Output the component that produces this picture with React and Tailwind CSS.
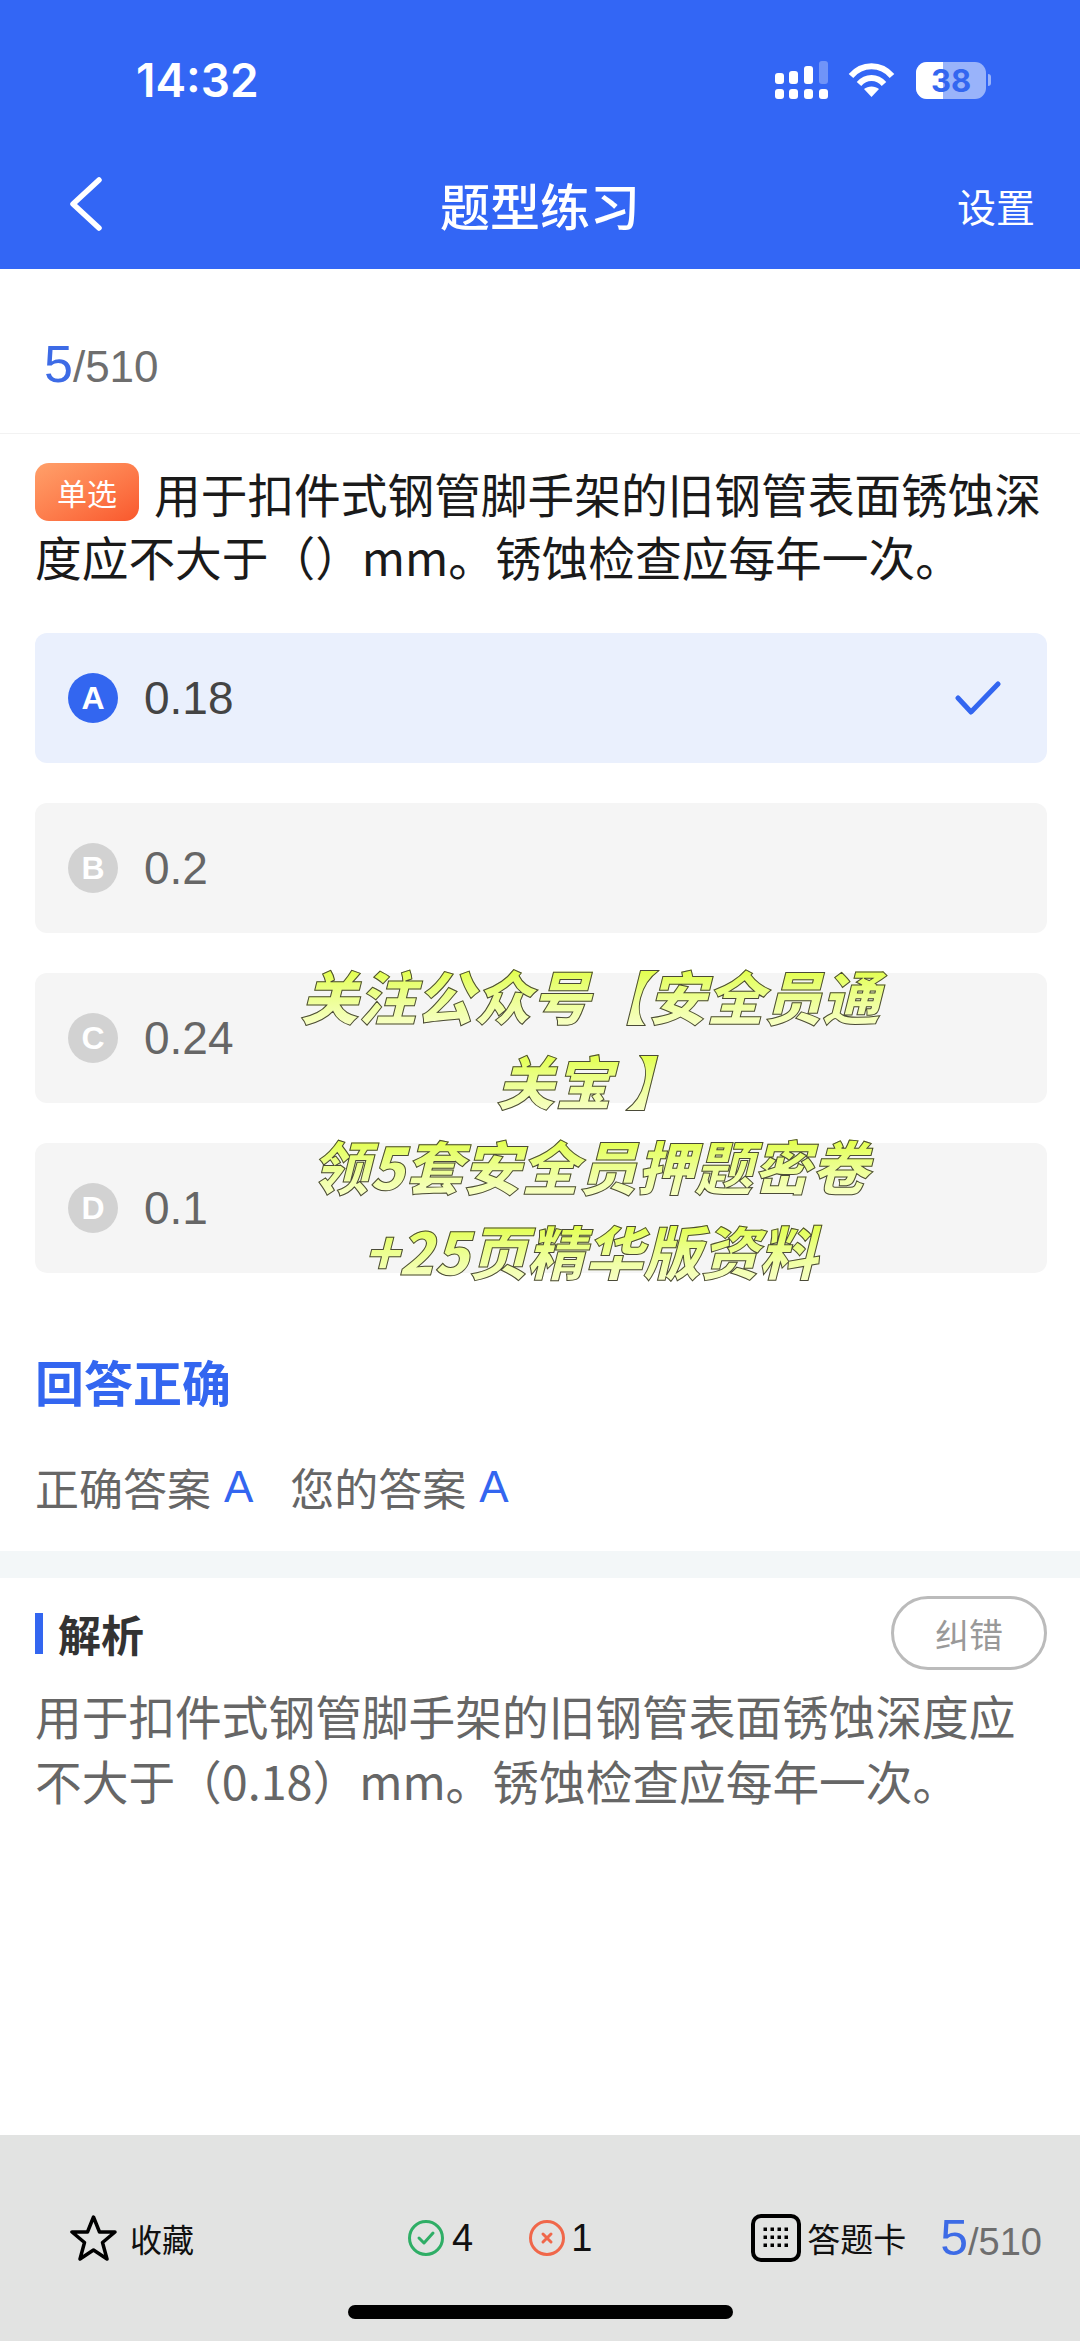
const options = [
  { letter: "B", value: "0.2" },
  { letter: "C", value: "0.24" },
  { letter: "D", value: "0.1" },
]

const promoLines = ["关注公众号【安全员通", "关宝 】", "领5套安全员押题密卷", "+25页精华版资料"]

function StatusIcons() {
  return (
    <div className="flex items-center">
      <svg width="55" height="40" viewBox="0 0 55 40" fill="white">
        <rect x="1" y="13" width="9" height="11" rx="3" />
        <rect x="15" y="11" width="9" height="13" rx="3" />
        <rect x="30" y="6" width="9" height="18" rx="3" />
        <rect x="45" y="1" width="9" height="23" rx="3" opacity="0.3" />
        <rect x="1" y="29" width="9" height="10" rx="3" />
        <rect x="15" y="29" width="9" height="10" rx="3" />
        <rect x="30" y="29" width="9" height="10" rx="3" />
        <rect x="45" y="29" width="9" height="10" rx="3" />
      </svg>
      <svg className="ml-[19px]" width="47" height="36" viewBox="0 0 47 36" fill="none" stroke="white" strokeWidth="6">
        <path d="M3 14C14 1 33 1 44 14" />
        <path d="M11 22C18 14 29 14 36 22" />
        <path d="M23.5 35L16 27C20 23.500 27 23.500 31 27Z" fill="white" stroke="none" />
      </svg>
      <div className="ml-[21px] relative w-[70px] h-[37px] rounded-[11px] bg-white/50 overflow-hidden flex items-center justify-center">
        <div className="absolute left-0 top-0 h-full w-[27px] bg-white" />
        <span className="relative text-[31px] font-bold text-[#3366f0] font-['Inter',sans-serif] leading-none">38</span>
      </div>
      <div className="ml-[2px] w-[3px] h-[12px] rounded-r bg-white/50" />
    </div>
  )
}

function OptionCircle({ letter, active }) {
  return (
    <span className={`w-[50px] h-[50px] rounded-full flex items-center justify-center text-white text-[32px] font-semibold font-['Liberation_Sans',sans-serif] ${active ? "bg-[#3366f0]" : "bg-[#d2d2d2]"}`}>
      {letter}
    </span>
  )
}

function Counter({ big, small }) {
  return (
    <span className="inline-flex items-baseline font-['Liberation_Sans',sans-serif]">
      <span className={`${big} leading-none text-[#3d6be6]`}>5</span>
      <span className={`${small} leading-none text-[#6e6e6e]`}>/510</span>
    </span>
  )
}

export default function App() {
  return (
    <div className="relative w-[1080px] h-[2341px] overflow-hidden bg-white flex flex-col font-['Noto_Sans_CJK_SC',sans-serif]">
      <header className="h-[269px] shrink-0 bg-[#3366f5] text-white">
        <div className="h-[48px] mt-[56px] pl-[136px] pr-[89px] flex items-center justify-between">
          <span className="text-[46px] font-semibold font-['Inter',sans-serif] leading-none">14:32</span>
          <StatusIcons />
        </div>
        <div className="mt-[60px] h-[80px] pl-[45px] pr-[45px] grid grid-cols-[1fr_auto_1fr] items-center">
          <svg className="ml-[22px]" width="36" height="54" viewBox="0 0 36 54" fill="none" stroke="white" strokeWidth="5.500" strokeLinecap="round" strokeLinejoin="round">
            <path d="M32 3L6 27L32 51" />
          </svg>
          <h1 className="text-[50px] font-medium leading-none">题型练习</h1>
          <span className="justify-self-end mt-[3px] text-[39px] leading-none">设置</span>
        </div>
      </header>

      <div className="h-[165px] shrink-0 pt-[25px] pl-[44px] flex items-center border-b border-[#f2f2f2]">
        <Counter big="text-[52px]" small="text-[44px]" />
      </div>

      <div className="pl-[35px] pr-[33px] pt-[27px]">
        <p className="text-[46.700px] leading-[63px] text-[#1a1a1a]">
          <span className="inline-flex align-top mt-[2px] mr-[15px] w-[104px] h-[58px] rounded-[14px] bg-gradient-to-br from-[#ffa06a] to-[#f9572c] text-white text-[30px] items-center justify-center">
            单选
          </span>
          用于扣件式钢管脚手架的旧钢管表面锈蚀深度应不大于（）mm。锈蚀检查应每年一次。
        </p>

        <div className="mt-[46px] flex flex-col gap-[40px]">
          <div className="h-[130px] rounded-[12px] bg-[#eaf0fd] pl-[33px] pr-[46px] flex items-center">
            <OptionCircle letter="A" active />
            <span className="ml-[26px] text-[46px] text-[#444] font-['Liberation_Sans',sans-serif]">0.18</span>
            <svg className="ml-auto" width="46" height="36" viewBox="0 0 46 36" fill="none" stroke="#3366f0" strokeWidth="5" strokeLinecap="round" strokeLinejoin="round">
              <path d="M3 18L16 32L43 4" />
            </svg>
          </div>
          {options.map((o) => (
            <div key={o.letter} className="h-[130px] rounded-[12px] bg-[#f5f5f5] pl-[33px] flex items-center">
              <OptionCircle letter={o.letter} />
              <span className="ml-[26px] text-[46px] text-[#666] font-['Liberation_Sans',sans-serif]">{o.value}</span>
            </div>
          ))}
        </div>

        <h2 className="mt-[78px] text-[49px] leading-[60px] font-bold text-[#3366f0]">回答正确</h2>
        <div className="mt-[46px] text-[44px] leading-[60px] text-[#666] flex">
          <span>正确答案</span>
          <span className="ml-[13px] text-[#3366f0] font-['Liberation_Sans',sans-serif]">A</span>
          <span className="ml-[37px]">您的答案</span>
          <span className="ml-[13px] text-[#3366f0] font-['Liberation_Sans',sans-serif]">A</span>
        </div>
      </div>

      <div className="mt-[34px] h-[27px] shrink-0 bg-[#f3f7f8]" />

      <div className="pl-[35px] pr-[33px] pt-[18px]">
        <div className="h-[74px] flex items-center justify-between">
          <div className="flex items-center">
            <span className="w-[8px] h-[41px] bg-[#3366f0]" />
            <span className="ml-[15px] text-[43px] font-bold text-[#333] leading-none">解析</span>
          </div>
          <span className="w-[156px] h-[74px] rounded-[37px] border-[3px] border-[#bbb] flex items-center justify-center text-[34px] text-[#999]">
            纠错
          </span>
        </div>
        <p className="mt-[12px] text-[46.700px] leading-[65px] text-[#666]">
          用于扣件式钢管脚手架的旧钢管表面锈蚀深度应不大于（0.18）mm。锈蚀检查应每年一次。
        </p>
      </div>

      <footer className="mt-auto h-[206px] shrink-0 bg-[#e2e3e2] pt-[73px]">
        <div className="h-[60px] pl-[70px] pr-[38px] flex items-center text-[#111]">
          <div className="flex items-center">
            <svg width="47" height="48" viewBox="0 0 47 48" fill="none" stroke="black" strokeWidth="3.500" strokeLinejoin="round">
              <path d="M23.500 3L29.500 18H45L32.500 28.500L37 45L23.500 36L10 45L14.500 28.500L2 18H17.500Z" />
            </svg>
            <span className="ml-[13px] text-[32px] leading-none">收藏</span>
          </div>

          <div className="ml-[214px] flex items-center font-['Liberation_Sans',sans-serif] text-[38px] leading-none">
            <svg width="36" height="36" viewBox="0 0 36 36" fill="none" stroke="#2fae66" strokeWidth="3">
              <circle cx="18" cy="18" r="16.500" />
              <path d="M11 18L16 23L25 13" strokeLinecap="round" strokeLinejoin="round" />
            </svg>
            <span className="ml-[8px]">4</span>
            <svg className="ml-[56px]" width="36" height="36" viewBox="0 0 36 36" fill="none" stroke="#f0674a" strokeWidth="3">
              <circle cx="18" cy="18" r="16.500" />
              <path d="M14 14L22 22M22 14L14 22" strokeLinecap="round" />
            </svg>
            <span className="ml-[6px]">1</span>
          </div>

          <div className="ml-auto flex items-center">
            <svg width="50" height="48" viewBox="0 0 50 48" fill="none">
              <rect x="2" y="2" width="46" height="44" rx="8" stroke="black" strokeWidth="4" />
              <g fill="black">
                {[15, 23, 31].map((y) =>
                  [14, 21, 28, 35].map((x) => <rect key={`${x}-${y}`} x={x - 1.500} y={y - 1.500} width="3.500" height="3.500" />)
                )}
              </g>
            </svg>
            <span className="ml-[6px] text-[33px] leading-none">答题卡</span>
            <span className="ml-[34px] leading-none">
              <Counter big="text-[50px]" small="text-[38px]" />
            </span>
          </div>
        </div>
        <div className="mt-[37px] mx-auto w-[385px] h-[14px] rounded-full bg-black" />
      </footer>

      {/* promo watermark over the options */}
      <div className="absolute left-[290px] top-[952px] w-[600px] text-center italic font-black text-[58px]">
        {promoLines.map((line) => (
          <div key={line} className="h-[85px] flex items-center justify-center">
            <span className="px-2 leading-[66px] whitespace-pre bg-gradient-to-b from-[#e0ff1e] to-[#f8ffc8] bg-clip-text text-transparent [-webkit-text-stroke:1px_#4a4a38]">
              {line}
            </span>
          </div>
        ))}
      </div>
    </div>
  )
}
